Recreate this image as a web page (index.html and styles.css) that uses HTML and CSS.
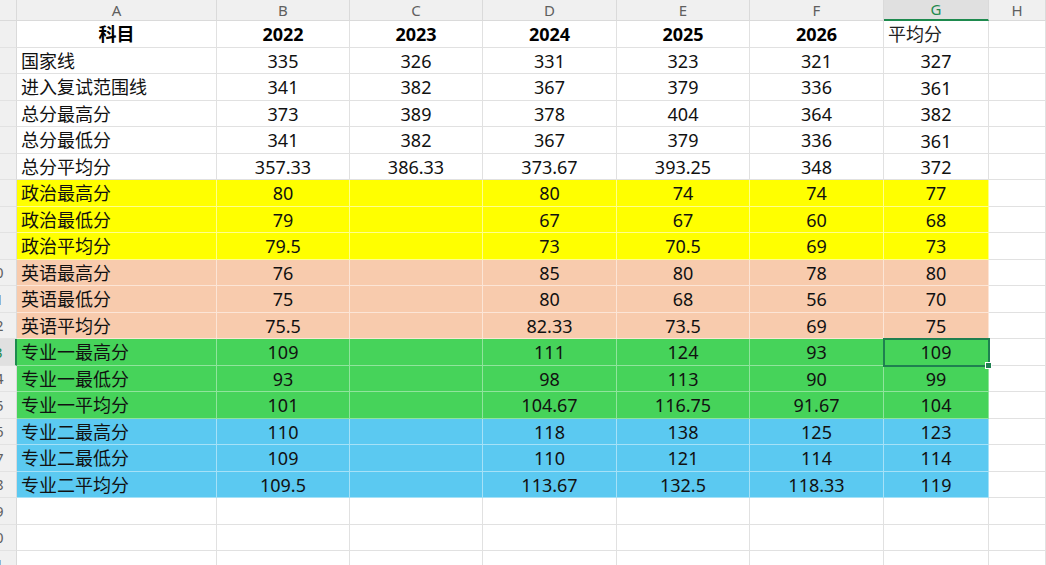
FILE: index.html
```html
<!DOCTYPE html>
<html lang="zh-CN">
<head>
<meta charset="utf-8">
<title>Sheet</title>
<link rel="stylesheet" href="styles.css">
</head>
<body>
<div class="sheet">
  <div class="colhdr">
    <div class="corner"></div>
    <div class="ch ca">A</div>
    <div class="ch cb">B</div>
    <div class="ch cc">C</div>
    <div class="ch cd">D</div>
    <div class="ch ce">E</div>
    <div class="ch cf">F</div>
    <div class="ch cg sel">G</div>
    <div class="ch chh">H</div>
  </div>

  <div class="row">
    <div class="rh"><span>1</span></div>
    <div class="c ca bold ctr">科目</div>
    <div class="c cb bold">2022</div>
    <div class="c cc bold">2023</div>
    <div class="c cd bold">2024</div>
    <div class="c ce bold">2025</div>
    <div class="c cf bold">2026</div>
    <div class="c cg left">平均分</div>
    <div class="c chh"></div>
  </div>

  <div class="row">
    <div class="rh"><span>2</span></div>
    <div class="c ca">国家线</div>
    <div class="c cb">335</div><div class="c cc">326</div><div class="c cd">331</div><div class="c ce">323</div><div class="c cf">321</div><div class="c cg low">327</div>
    <div class="c chh"></div>
  </div>
  <div class="row">
    <div class="rh"><span>3</span></div>
    <div class="c ca">进入复试范围线</div>
    <div class="c cb">341</div><div class="c cc">382</div><div class="c cd">367</div><div class="c ce">379</div><div class="c cf">336</div><div class="c cg low">361</div>
    <div class="c chh"></div>
  </div>
  <div class="row">
    <div class="rh"><span>4</span></div>
    <div class="c ca">总分最高分</div>
    <div class="c cb">373</div><div class="c cc">389</div><div class="c cd">378</div><div class="c ce">404</div><div class="c cf">364</div><div class="c cg low">382</div>
    <div class="c chh"></div>
  </div>
  <div class="row">
    <div class="rh"><span>5</span></div>
    <div class="c ca">总分最低分</div>
    <div class="c cb">341</div><div class="c cc">382</div><div class="c cd">367</div><div class="c ce">379</div><div class="c cf">336</div><div class="c cg low">361</div>
    <div class="c chh"></div>
  </div>
  <div class="row">
    <div class="rh"><span>6</span></div>
    <div class="c ca">总分平均分</div>
    <div class="c cb">357.33</div><div class="c cc">386.33</div><div class="c cd">373.67</div><div class="c ce">393.25</div><div class="c cf">348</div><div class="c cg low">372</div>
    <div class="c chh"></div>
  </div>

  <div class="row yellow">
    <div class="rh"><span>7</span></div>
    <div class="c ca">政治最高分</div>
    <div class="c cb">80</div><div class="c cc"></div><div class="c cd">80</div><div class="c ce">74</div><div class="c cf">74</div><div class="c cg">77</div>
    <div class="c chh"></div>
  </div>
  <div class="row yellow">
    <div class="rh"><span>8</span></div>
    <div class="c ca">政治最低分</div>
    <div class="c cb">79</div><div class="c cc"></div><div class="c cd">67</div><div class="c ce">67</div><div class="c cf">60</div><div class="c cg">68</div>
    <div class="c chh"></div>
  </div>
  <div class="row yellow">
    <div class="rh"><span>9</span></div>
    <div class="c ca">政治平均分</div>
    <div class="c cb">79.5</div><div class="c cc"></div><div class="c cd">73</div><div class="c ce">70.5</div><div class="c cf">69</div><div class="c cg">73</div>
    <div class="c chh"></div>
  </div>

  <div class="row salmon">
    <div class="rh"><span>10</span></div>
    <div class="c ca">英语最高分</div>
    <div class="c cb">76</div><div class="c cc"></div><div class="c cd">85</div><div class="c ce">80</div><div class="c cf">78</div><div class="c cg">80</div>
    <div class="c chh"></div>
  </div>
  <div class="row salmon">
    <div class="rh"><span>11</span></div>
    <div class="c ca">英语最低分</div>
    <div class="c cb">75</div><div class="c cc"></div><div class="c cd">80</div><div class="c ce">68</div><div class="c cf">56</div><div class="c cg">70</div>
    <div class="c chh"></div>
  </div>
  <div class="row salmon">
    <div class="rh"><span>12</span></div>
    <div class="c ca">英语平均分</div>
    <div class="c cb">75.5</div><div class="c cc"></div><div class="c cd">82.33</div><div class="c ce">73.5</div><div class="c cf">69</div><div class="c cg">75</div>
    <div class="c chh"></div>
  </div>

  <div class="row green">
    <div class="rh rsel"><span>13</span></div>
    <div class="c ca">专业一最高分</div>
    <div class="c cb">109</div><div class="c cc"></div><div class="c cd">111</div><div class="c ce">124</div><div class="c cf">93</div><div class="c cg active">109</div>
    <div class="c chh"></div>
  </div>
  <div class="row green">
    <div class="rh"><span>14</span></div>
    <div class="c ca">专业一最低分</div>
    <div class="c cb">93</div><div class="c cc"></div><div class="c cd">98</div><div class="c ce">113</div><div class="c cf">90</div><div class="c cg">99</div>
    <div class="c chh"></div>
  </div>
  <div class="row green">
    <div class="rh"><span>15</span></div>
    <div class="c ca">专业一平均分</div>
    <div class="c cb">101</div><div class="c cc"></div><div class="c cd">104.67</div><div class="c ce">116.75</div><div class="c cf">91.67</div><div class="c cg">104</div>
    <div class="c chh"></div>
  </div>

  <div class="row blue">
    <div class="rh"><span>16</span></div>
    <div class="c ca">专业二最高分</div>
    <div class="c cb">110</div><div class="c cc"></div><div class="c cd">118</div><div class="c ce">138</div><div class="c cf">125</div><div class="c cg">123</div>
    <div class="c chh"></div>
  </div>
  <div class="row blue">
    <div class="rh"><span>17</span></div>
    <div class="c ca">专业二最低分</div>
    <div class="c cb">109</div><div class="c cc"></div><div class="c cd">110</div><div class="c ce">121</div><div class="c cf">114</div><div class="c cg">114</div>
    <div class="c chh"></div>
  </div>
  <div class="row blue">
    <div class="rh"><span>18</span></div>
    <div class="c ca">专业二平均分</div>
    <div class="c cb">109.5</div><div class="c cc"></div><div class="c cd">113.67</div><div class="c ce">132.5</div><div class="c cf">118.33</div><div class="c cg">119</div>
    <div class="c chh"></div>
  </div>

  <div class="row">
    <div class="rh"><span>19</span></div>
    <div class="c ca"></div><div class="c cb"></div><div class="c cc"></div><div class="c cd"></div><div class="c ce"></div><div class="c cf"></div><div class="c cg"></div><div class="c chh"></div>
  </div>
  <div class="row">
    <div class="rh"><span>20</span></div>
    <div class="c ca"></div><div class="c cb"></div><div class="c cc"></div><div class="c cd"></div><div class="c ce"></div><div class="c cf"></div><div class="c cg"></div><div class="c chh"></div>
  </div>
  <div class="row">
    <div class="rh"><span>21</span></div>
    <div class="c ca"></div><div class="c cb"></div><div class="c cc"></div><div class="c cd"></div><div class="c ce"></div><div class="c cf"></div><div class="c cg"></div><div class="c chh"></div>
  </div>
</div>
</body>
</html>
```

FILE: styles.css
```css
* { box-sizing: border-box; }

html, body {
  margin: 0;
  padding: 0;
  width: 1046px;
  height: 565px;
  overflow: hidden;
  background: #ffffff;
}

.sheet {
  display: flex;
  flex-direction: column;
  width: 1046px;
  font-family: "Noto Sans", "Noto Sans CJK SC", sans-serif;
  color: #111;
}

.colhdr {
  display: flex;
  height: 21px;
  background: #f0f0f0;
  flex-shrink: 0;
}

.corner {
  width: 17px;
  flex-shrink: 0;
  border-right: 1px solid #dadada;
  border-bottom: 1px solid #dadada;
}

.ch {
  display: flex;
  align-items: center;
  justify-content: center;
  font-family: "Noto Sans", sans-serif;
  font-size: 15px;
  color: #5f5f5f;
  border-right: 1px solid #dadada;
  border-bottom: 1px solid #dadada;
  padding-bottom: 1px;
}

.ch.sel {
  background: #e0e0e0;
  color: #1e8a4e;
  border-bottom: 2px solid #1e8a4e;
}

.ca { width: 200px; flex-shrink: 0; }
.cb { width: 133px; flex-shrink: 0; }
.cc { width: 133px; flex-shrink: 0; }
.cd { width: 134px; flex-shrink: 0; }
.ce { width: 133px; flex-shrink: 0; }
.cf { width: 134px; flex-shrink: 0; }
.cg { width: 105px; flex-shrink: 0; }
.chh { flex: 1; }

.row {
  display: flex;
  height: 26.5px;
  flex-shrink: 0;
}

.rh {
  width: 17px;
  flex-shrink: 0;
  display: flex;
  justify-content: flex-end;
  align-items: center;
  overflow: hidden;
  background: #f0f0f0;
  border-right: 1px solid #dadada;
  border-bottom: 1px solid #e2e2e2;
  font-family: "Noto Sans", sans-serif;
  font-size: 15px;
  color: #5f5f5f;
}

.rh span {
  flex-shrink: 0;
  width: 42px;
  text-align: center;
}

.rh.rsel {
  background: #e0e0e0;
  color: #1e8a4e;
  border-right: 2px solid #1e8a4e;
}

.c {
  display: flex;
  align-items: center;
  justify-content: center;
  font-size: 18px;
  line-height: 1;
  white-space: nowrap;
  border-right: 1px solid #e1e1e1;
  border-bottom: 1px solid #e1e1e1;
  padding-top: 1px;
}

.c.ca {
  justify-content: flex-start;
  padding-left: 4px;
}

.c.ca.ctr {
  justify-content: center;
  padding-left: 0;
}

.c.left {
  justify-content: flex-start;
  padding-left: 4px;
  color: #222;
}

.c.low { padding-top: 2px; }

.bold { font-weight: 700; color: #000; }

.yellow .c:not(.chh) {
  background: #ffff00;
  border-color: rgba(255, 255, 255, 0.55);
}

.salmon .c:not(.chh) {
  background: #f8cbad;
  border-color: rgba(255, 255, 255, 0.5);
}

.green .c:not(.chh) {
  background: #46d35a;
  border-color: rgba(255, 255, 255, 0.4);
}

.blue .c:not(.chh) {
  background: #5bc9f1;
  border-color: rgba(255, 255, 255, 0.45);
}

.c.active {
  position: relative;
  outline: 2px solid #1f8050;
  outline-offset: -1px;
}

.c.active::after {
  content: "";
  position: absolute;
  right: -4px;
  bottom: -4px;
  width: 5px;
  height: 5px;
  background: #1f8050;
  border: 1px solid #ffffff;
}
```
